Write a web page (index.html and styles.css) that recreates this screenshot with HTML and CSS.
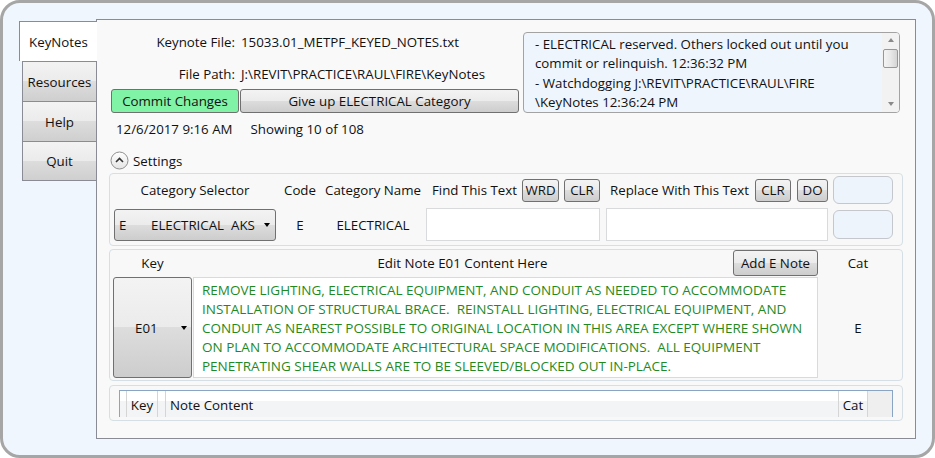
FILE: index.html
```html
<!DOCTYPE html>
<html>
<head>
<meta charset="utf-8">
<title>KeyNotes</title>
<link rel="stylesheet" href="styles.css">
</head>
<body>
<div class="window">
  <div class="tabs">
    <div class="tab tab-active">KeyNotes</div>
    <div class="tab">Resources</div>
    <div class="tab">Help</div>
    <div class="tab tab-last">Quit</div>
  </div>
  <div class="panel">
    <div class="top">
      <div class="info">
        <div class="fileinfo">
          <span class="lbl">Keynote File:</span><span>15033.01_METPF_KEYED_NOTES.txt</span>
          <span class="lbl">File Path:</span><span>J:\REVIT\PRACTICE\RAUL\FIRE\KeyNotes</span>
        </div>
        <div class="actions">
          <div class="btn btn-commit">Commit Changes</div>
          <div class="btn btn-giveup">Give up ELECTRICAL Category</div>
        </div>
        <div class="status"><span class="date">12/6/2017 9:16 AM</span><span>Showing 10 of 108</span></div>
      </div>
      <div class="log">
        <div class="log-text">- ELECTRICAL reserved. Others locked out until you<br>commit or relinquish. 12:36:32 PM<br>- Watchdogging J:\REVIT\PRACTICE\RAUL\FIRE<br>\KeyNotes 12:36:24 PM</div>
        <div class="vscroll">
          <div class="arrow arrow-up"></div>
          <div class="thumb"></div>
          <div class="track"></div>
          <div class="arrow arrow-down"></div>
        </div>
      </div>
    </div>

    <div class="expander">
      <span class="exp-icon"><svg width="19" height="19" viewBox="0 0 19 19"><defs><linearGradient id="eg" x1="0" y1="0" x2="0" y2="1"><stop offset="0" stop-color="#ffffff"/><stop offset="1" stop-color="#e4e4e4"/></linearGradient></defs><circle cx="9.5" cy="9.5" r="8.5" fill="url(#eg)" stroke="#8e8f8f" stroke-width="1"/><path d="M6 11 L9.5 7.5 L13 11" fill="none" stroke="#333" stroke-width="1.6"/></svg></span>
      <span>Settings</span>
    </div>

    <div class="group settings">
      <div class="cell c1 hdr">Category Selector</div>
      <div class="cell c2 hdr">Code</div>
      <div class="cell c3 hdr">Category Name</div>
      <div class="cell c4 hdr tools"><span class="tool-lbl">Find This Text</span><span class="sbtn sbtn-wrd">WRD</span><span class="sbtn">CLR</span></div>
      <div class="cell c5 hdr tools"><span class="tool-lbl">Replace With This Text</span><span class="sbtn">CLR</span><span class="sbtn sbtn-do">DO</span></div>
      <div class="cell c6"><div class="bluebox bluebox-top"></div></div>

      <div class="cell c1"><div class="combo"><span class="combo-code">E</span><span class="combo-name">ELECTRICAL&nbsp;&nbsp;AKS</span><span class="tri"></span></div></div>
      <div class="cell c2">E</div>
      <div class="cell c3">ELECTRICAL</div>
      <div class="cell c4"><div class="textbox tb-find"></div></div>
      <div class="cell c5"><div class="textbox tb-replace"></div></div>
      <div class="cell c6"><div class="bluebox bluebox-bottom"></div></div>
    </div>

    <div class="group edit">
      <div class="ecell e-key-h">Key</div>
      <div class="ecell e-note-h"><span class="e-title">Edit Note E01 Content Here</span><span class="btn btn-add">Add E Note</span></div>
      <div class="ecell e-cat-h">Cat</div>
      <div class="ecell"><div class="keybtn"><span>E01</span><span class="tri"></span></div></div>
      <div class="ecell"><div class="notebox">REMOVE LIGHTING, ELECTRICAL EQUIPMENT, AND CONDUIT AS NEEDED TO ACCOMMODATE<br>INSTALLATION OF STRUCTURAL BRACE.&nbsp; REINSTALL LIGHTING, ELECTRICAL EQUIPMENT, AND<br>CONDUIT AS NEAREST POSSIBLE TO ORIGINAL LOCATION IN THIS AREA EXCEPT WHERE SHOWN<br>ON PLAN TO ACCOMMODATE ARCHITECTURAL SPACE MODIFICATIONS.&nbsp; ALL EQUIPMENT<br>PENETRATING SHEAR WALLS ARE TO BE SLEEVED/BLOCKED OUT IN-PLACE.</div></div>
      <div class="ecell e-cat">E</div>
    </div>

    <div class="group listgroup">
      <div class="list">
        <div class="lh lh-pad"></div>
        <div class="lh lh-key">Key</div>
        <div class="lh lh-gap"></div>
        <div class="lh lh-note">Note Content</div>
        <div class="lh lh-cat">Cat</div>
        <div class="lh lh-fill"></div>
      </div>
    </div>
  </div>
</div>
</body>
</html>
```

FILE: styles.css
```css
html, body {
  margin: 0;
  padding: 0;
  background: #ffffff;
}

body {
  font-family: "Open Sans", "Noto Sans", sans-serif;
  font-size: 13.3px;
  color: #111;
}

.window {
  width: 935px;
  height: 458px;
  box-sizing: border-box;
  border: 3px solid #a6a6a6;
  border-radius: 20px;
  background: #eff6fe;
  padding: 16px 0 0 16px;
  display: flex;
  align-items: flex-start;
}

/* ---------- tabs ---------- */
.tabs {
  width: 78px;
  margin-top: 2px;
  margin-right: -1px;
  display: flex;
  flex-direction: column;
  position: relative;
  z-index: 1;
}

.tab {
  height: 40px;
  box-sizing: border-box;
  margin-left: 3px;
  border: 1px solid #898c95;
  border-bottom: none;
  background: linear-gradient(#f3f3f3 0%, #ebebeb 50%, #dddddd 50%, #cfcfcf 100%);
  display: flex;
  align-items: center;
  justify-content: center;
}

.tab-last {
  border-bottom: 1px solid #898c95;
}

.tab-active {
  margin-left: 0;
  background: #ffffff;
  border-right: none;
}

/* ---------- panel ---------- */
.panel {
  width: 820px;
  height: 420px;
  box-sizing: border-box;
  margin-top: 0;
  border: 1px solid #898c95;
  background: #f9f9f9;
  padding: 0 12px 0 12px;
}

.top {
  display: flex;
  align-items: flex-start;
}

.info {
  width: 408px;
  margin-left: 2px;
  margin-top: 14px;
}

.fileinfo {
  display: grid;
  grid-template-columns: 124px auto;
  column-gap: 6px;
  row-gap: 16px;
  line-height: 16px;
  white-space: nowrap;
}

.lbl {
  text-align: right;
}

.actions {
  display: flex;
  gap: 1px;
  margin-top: 7px;
}

.btn {
  box-sizing: border-box;
  height: 24px;
  border: 1px solid #707070;
  border-radius: 3px;
  background: linear-gradient(#f3f3f3 0%, #ebebeb 50%, #dddddd 50%, #cdcdcd 100%);
  display: flex;
  align-items: center;
  justify-content: center;
  white-space: nowrap;
}

.btn-commit {
  width: 128px;
  background: #80f3a6;
}

.btn-giveup {
  width: 279px;
}

.status {
  margin-top: 8px;
  line-height: 16px;
  white-space: nowrap;
}

.date {
  margin-left: 5px;
  margin-right: 18px;
}

/* ---------- log box ---------- */
.log {
  margin-left: 4px;
  margin-top: 12px;
  width: 377px;
  height: 81px;
  box-sizing: border-box;
  border: 1px solid #a3a3a3;
  border-radius: 4px;
  background: #eef5fd;
  display: flex;
  overflow: hidden;
}

.log-text {
  flex: 1;
  padding: 2px 0 0 11px;
  line-height: 19.3px;
  white-space: nowrap;
  overflow: hidden;
}

.vscroll {
  width: 17px;
  display: flex;
  flex-direction: column;
  align-items: center;
  background: #f2f2f2;
}

.arrow {
  width: 0;
  height: 0;
  border-left: 3.5px solid transparent;
  border-right: 3.5px solid transparent;
}

.arrow-up {
  margin-top: 5px;
  border-bottom: 4px solid #8a8a8a;
}

.arrow-down {
  margin-bottom: 6px;
  border-top: 4px solid #8a8a8a;
}

.thumb {
  margin-top: 7px;
  width: 15px;
  height: 19px;
  box-sizing: border-box;
  border: 1px solid #979797;
  border-radius: 2px;
  background: linear-gradient(90deg, #f4f4f4 0%, #e8e8e8 50%, #d4d4d4 100%);
}

.track {
  flex: 1;
}

/* ---------- expander ---------- */
.expander {
  display: flex;
  align-items: center;
  gap: 4px;
  margin-top: 14px;
  margin-left: 1px;
  height: 19px;
}

.exp-icon {
  display: flex;
  width: 19px;
  height: 19px;
}

/* ---------- group boxes ---------- */
.group {
  box-sizing: border-box;
  width: 794px;
  border: 1px solid #d5dfe5;
  border-radius: 4px;
  background: #f8f8f8;
}

.settings {
  margin-top: 3px;
  height: 73px;
  padding: 2px 0 0 4px;
  display: grid;
  grid-template-columns: 162px 46px 98px 180px 228px 65px;
  grid-template-rows: 28px 33px;
  row-gap: 4px;
}

.cell {
  display: flex;
  align-items: center;
  white-space: nowrap;
}

.c1, .c2, .c3 {
  justify-content: center;
}

.c2 {
  padding-left: 2px;
}

.c3 {
  padding-left: 4px;
}

.tools {
  justify-content: flex-end;
  gap: 6px;
}

.c4.tools {
  gap: 5px;
}

.sbtn {
  box-sizing: border-box;
  height: 23px;
  padding: 0 3px;
  border: 1px solid #707070;
  border-radius: 3px;
  background: linear-gradient(#f3f3f3 0%, #ebebeb 50%, #dddddd 50%, #cdcdcd 100%);
  display: flex;
  align-items: center;
  justify-content: center;
}

.sbtn-wrd {
  width: 37px;
}

.c4 .sbtn:last-child {
  width: 36px;
}

.c5 .sbtn {
  width: 36px;
}

.c5 .sbtn-do {
  width: 31px;
}

.c6 {
  padding-left: 5px;
}

.bluebox {
  box-sizing: border-box;
  width: 60px;
  border: 1px solid #c4c8cc;
  border-radius: 6px;
  background: #edf4fc;
}

.bluebox-top {
  height: 28px;
}

.bluebox-bottom {
  height: 29px;
}

.combo {
  box-sizing: border-box;
  width: 162px;
  height: 32px;
  border: 1px solid #707070;
  border-radius: 3px;
  background: linear-gradient(#f3f3f3 0%, #ebebeb 50%, #dddddd 50%, #cdcdcd 100%);
  display: flex;
  align-items: center;
  padding-left: 4px;
}

.combo-code {
  width: 32px;
}

.combo-name {
  flex: 1;
}

.tri {
  width: 0;
  height: 0;
  border-left: 3.5px solid transparent;
  border-right: 3.5px solid transparent;
  border-top: 4px solid #000;
  margin-right: 5px;
}

.textbox {
  box-sizing: border-box;
  height: 33px;
  border: 1px solid #d9dadc;
  background: #ffffff;
}

.tb-find {
  width: 174px;
  margin-left: 6px;
}

.tb-replace {
  width: 222px;
  margin-left: 6px;
}

/* ---------- edit group ---------- */
.edit {
  margin-top: 3px;
  height: 132px;
  padding: 0 0 0 3px;
  display: grid;
  grid-template-columns: 79px 626px 80px;
  grid-template-rows: 26px 101px;
  row-gap: 1px;
}

.ecell {
  display: flex;
  align-items: center;
  justify-content: center;
  white-space: nowrap;
}

.e-note-h {
  justify-content: flex-start;
}

.e-title {
  flex: 1;
  text-align: center;
}

.btn-add {
  width: 85px;
  height: 26px;
}

.keybtn {
  box-sizing: border-box;
  width: 79px;
  height: 101px;
  border: 1px solid #707070;
  border-radius: 3px;
  background: linear-gradient(#f3f3f3 0%, #ebebeb 50%, #dddddd 50%, #cdcdcd 100%);
  display: flex;
  align-items: center;
  padding-left: 21px;
}

.keybtn span:first-child {
  flex: 1;
}

.keybtn .tri {
  margin-right: 4px;
}

.notebox {
  box-sizing: border-box;
  width: 626px;
  height: 101px;
  margin-left: 1px;
  border: 1px solid #d9dadc;
  background: #ffffff;
  color: #1f8a1f;
  font-size: 13.5px;
  padding: 3px 0 0 8px;
  line-height: 19px;
  overflow: hidden;
}

/* ---------- list group ---------- */
.listgroup {
  margin-top: 4px;
  height: 36px;
  padding: 4px 9px 0 9px;
}

.list {
  box-sizing: border-box;
  height: 27px;
  border: 1px solid #8aa4c4;
  border-bottom: none;
  display: flex;
  overflow: hidden;
  background: #ffffff;
}

.lh {
  height: 26px;
  box-sizing: border-box;
  background: linear-gradient(#ffffff 0%, #ffffff 40%, #f3f4f6 40%, #f3f4f6 100%);
  border-right: 1px solid #d5d5d5;
  display: flex;
  align-items: center;
  padding-top: 2px;
  white-space: nowrap;
}

.lh-pad {
  width: 7px;
}

.lh-key {
  width: 31px;
  justify-content: center;
}

.lh-gap {
  width: 8px;
}

.lh-note {
  flex: 1;
  padding-left: 4px;
}

.lh-cat {
  width: 29px;
  justify-content: center;
}

.lh-fill {
  width: 24px;
  border-right: none;
  background: #efefef;
}
```
